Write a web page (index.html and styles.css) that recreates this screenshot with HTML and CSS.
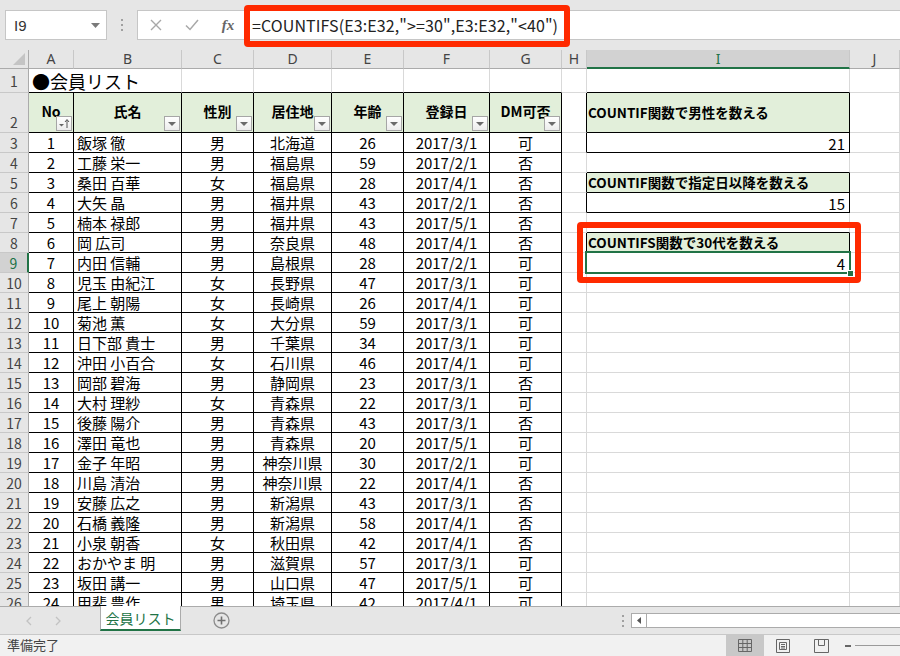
FILE: index.html
```html
<!DOCTYPE html>
<html lang="ja">
<head>
<meta charset="utf-8">
<title>会員リスト</title>
<link rel="stylesheet" href="styles.css">
</head>
<body>
<div class="app">
  <div class="fbar">
    <div class="namebox"><span class="nb-text">I9</span><svg class="nb-arrow" width="9" height="5" viewBox="0 0 9 5"><path d="M0 0H9L4.5 5Z" fill="#7a7a7a"/></svg></div>
    <div class="vdots"><i></i><i></i><i></i></div>
    <div class="formula">
      <span class="fbtn"><svg width="12" height="12" viewBox="0 0 12 12"><path d="M1 1L11 11M11 1L1 11" stroke="#a8a8a8" stroke-width="1.4" fill="none"/></svg></span>
      <span class="fbtn"><svg width="14" height="12" viewBox="0 0 14 12"><path d="M1 6.5L5 10.5L13 1" stroke="#a8a8a8" stroke-width="1.5" fill="none"/></svg></span>
      <span class="fbtn fx">fx</span>
      <span class="ftext">=COUNTIFS(E3:E32,"&gt;=30",E3:E32,"&lt;40")</span>
    </div>
    <div class="hl hl-formula"></div>
  </div>

  <div class="sheet">
    <table class="grid">
      <colgroup>
        <col class="w-rh"><col class="w-a"><col class="w-b"><col class="w-c"><col class="w-d"><col class="w-e"><col class="w-f"><col class="w-g"><col class="w-h"><col class="w-i"><col class="w-j">
      </colgroup>
      <tr class="r-ch">
        <td class="corner"><svg width="29" height="18" viewBox="0 0 29 18"><path d="M25 3V15H13Z" fill="#c4c4c4"/></svg></td>
        <td class="ch">A</td><td class="ch">B</td><td class="ch">C</td><td class="ch">D</td><td class="ch">E</td><td class="ch">F</td><td class="ch">G</td><td class="ch">H</td><td class="ch sel">I</td><td class="ch">J</td>
      </tr>
      <tr class="r-1">
        <td class="rh">1</td>
        <td class="title bb" colspan="2">●会員リスト</td>
        <td class="bb"></td><td class="bb"></td><td class="bb"></td><td class="bb"></td><td class="bb"></td><td></td><td class="bb"></td><td></td>
      </tr>
      <tr class="r-2">
        <td class="rh rh-bot">2</td>
        <td class="t hd">No<span class="fb fb-sort"><svg width="14" height="13" viewBox="0 0 14 13"><path d="M2 7H7L4.5 9.5Z" fill="#666"/><path d="M10 11V3M8 5L10 2.5L12 5" stroke="#555" stroke-width="1" fill="none"/></svg></span></td>
        <td class="t hd">氏名<span class="fb"></span></td>
        <td class="t hd">性別<span class="fb"></span></td>
        <td class="t hd">居住地<span class="fb"></span></td>
        <td class="t hd">年齢<span class="fb"></span></td>
        <td class="t hd">登録日<span class="fb"></span></td>
        <td class="t hd">DM可否<span class="fb"></span></td>
        <td class="hb"></td>
        <td class="bx bxh">COUNTIF関数で男性を数える</td>
        <td></td>
      </tr>
      <tr><td class="rh">3</td><td class="t c">1</td><td class="t l">飯塚 徹</td><td class="t c">男</td><td class="t c">北海道</td><td class="t c">26</td><td class="t c">2017/3/1</td><td class="t c">可</td><td class="hb"></td><td class="bx v">21</td><td></td></tr>
      <tr><td class="rh">4</td><td class="t c">2</td><td class="t l">工藤 栄一</td><td class="t c">男</td><td class="t c">福島県</td><td class="t c">59</td><td class="t c">2017/2/1</td><td class="t c">否</td><td></td><td class="bb"></td><td></td></tr>
      <tr><td class="rh">5</td><td class="t c">3</td><td class="t l">桑田 百華</td><td class="t c">女</td><td class="t c">福島県</td><td class="t c">28</td><td class="t c">2017/4/1</td><td class="t c">否</td><td class="hb"></td><td class="bx bxh">COUNTIF関数で指定日以降を数える</td><td></td></tr>
      <tr><td class="rh">6</td><td class="t c">4</td><td class="t l">大矢 晶</td><td class="t c">男</td><td class="t c">福井県</td><td class="t c">43</td><td class="t c">2017/2/1</td><td class="t c">否</td><td class="hb"></td><td class="bx v">15</td><td></td></tr>
      <tr><td class="rh">7</td><td class="t c">5</td><td class="t l">楠本 禄郎</td><td class="t c">男</td><td class="t c">福井県</td><td class="t c">43</td><td class="t c">2017/5/1</td><td class="t c">否</td><td></td><td class="bb"></td><td></td></tr>
      <tr><td class="rh">8</td><td class="t c">6</td><td class="t l">岡 広司</td><td class="t c">男</td><td class="t c">奈良県</td><td class="t c">48</td><td class="t c">2017/4/1</td><td class="t c">否</td><td class="hb"></td><td class="bx bxh">COUNTIFS関数で30代を数える</td><td></td></tr>
      <tr><td class="rh rsel">9</td><td class="t c">7</td><td class="t l">内田 信輔</td><td class="t c">男</td><td class="t c">島根県</td><td class="t c">28</td><td class="t c">2017/2/1</td><td class="t c">可</td><td class="hb"></td><td class="bx v cur">4<span class="selbox"></span><span class="handle"></span></td><td></td></tr>
      <tr><td class="rh">10</td><td class="t c">8</td><td class="t l">児玉 由紀江</td><td class="t c">女</td><td class="t c">長野県</td><td class="t c">47</td><td class="t c">2017/3/1</td><td class="t c">可</td><td></td><td></td><td></td></tr>
      <tr><td class="rh">11</td><td class="t c">9</td><td class="t l">尾上 朝陽</td><td class="t c">女</td><td class="t c">長崎県</td><td class="t c">26</td><td class="t c">2017/4/1</td><td class="t c">可</td><td></td><td></td><td></td></tr>
      <tr><td class="rh">12</td><td class="t c">10</td><td class="t l">菊池 薫</td><td class="t c">女</td><td class="t c">大分県</td><td class="t c">59</td><td class="t c">2017/3/1</td><td class="t c">可</td><td></td><td></td><td></td></tr>
      <tr><td class="rh">13</td><td class="t c">11</td><td class="t l">日下部 貴士</td><td class="t c">男</td><td class="t c">千葉県</td><td class="t c">34</td><td class="t c">2017/3/1</td><td class="t c">可</td><td></td><td></td><td></td></tr>
      <tr><td class="rh">14</td><td class="t c">12</td><td class="t l">沖田 小百合</td><td class="t c">女</td><td class="t c">石川県</td><td class="t c">46</td><td class="t c">2017/4/1</td><td class="t c">可</td><td></td><td></td><td></td></tr>
      <tr><td class="rh">15</td><td class="t c">13</td><td class="t l">岡部 碧海</td><td class="t c">男</td><td class="t c">静岡県</td><td class="t c">23</td><td class="t c">2017/3/1</td><td class="t c">否</td><td></td><td></td><td></td></tr>
      <tr><td class="rh">16</td><td class="t c">14</td><td class="t l">大村 理紗</td><td class="t c">女</td><td class="t c">青森県</td><td class="t c">22</td><td class="t c">2017/3/1</td><td class="t c">可</td><td></td><td></td><td></td></tr>
      <tr><td class="rh">17</td><td class="t c">15</td><td class="t l">後藤 陽介</td><td class="t c">男</td><td class="t c">青森県</td><td class="t c">43</td><td class="t c">2017/3/1</td><td class="t c">否</td><td></td><td></td><td></td></tr>
      <tr><td class="rh">18</td><td class="t c">16</td><td class="t l">澤田 竜也</td><td class="t c">男</td><td class="t c">青森県</td><td class="t c">20</td><td class="t c">2017/5/1</td><td class="t c">可</td><td></td><td></td><td></td></tr>
      <tr><td class="rh">19</td><td class="t c">17</td><td class="t l">金子 年昭</td><td class="t c">男</td><td class="t c">神奈川県</td><td class="t c">30</td><td class="t c">2017/2/1</td><td class="t c">可</td><td></td><td></td><td></td></tr>
      <tr><td class="rh">20</td><td class="t c">18</td><td class="t l">川島 清治</td><td class="t c">男</td><td class="t c">神奈川県</td><td class="t c">22</td><td class="t c">2017/4/1</td><td class="t c">否</td><td></td><td></td><td></td></tr>
      <tr><td class="rh">21</td><td class="t c">19</td><td class="t l">安藤 広之</td><td class="t c">男</td><td class="t c">新潟県</td><td class="t c">43</td><td class="t c">2017/3/1</td><td class="t c">否</td><td></td><td></td><td></td></tr>
      <tr><td class="rh">22</td><td class="t c">20</td><td class="t l">石橋 義隆</td><td class="t c">男</td><td class="t c">新潟県</td><td class="t c">58</td><td class="t c">2017/4/1</td><td class="t c">否</td><td></td><td></td><td></td></tr>
      <tr><td class="rh">23</td><td class="t c">21</td><td class="t l">小泉 朝香</td><td class="t c">女</td><td class="t c">秋田県</td><td class="t c">42</td><td class="t c">2017/4/1</td><td class="t c">否</td><td></td><td></td><td></td></tr>
      <tr><td class="rh">24</td><td class="t c">22</td><td class="t l">おかやま 明</td><td class="t c">男</td><td class="t c">滋賀県</td><td class="t c">57</td><td class="t c">2017/3/1</td><td class="t c">可</td><td></td><td></td><td></td></tr>
      <tr><td class="rh">25</td><td class="t c">23</td><td class="t l">坂田 講一</td><td class="t c">男</td><td class="t c">山口県</td><td class="t c">47</td><td class="t c">2017/5/1</td><td class="t c">可</td><td></td><td></td><td></td></tr>
      <tr><td class="rh">26</td><td class="t c">24</td><td class="t l">甲斐 豊作</td><td class="t c">男</td><td class="t c">埼玉県</td><td class="t c">42</td><td class="t c">2017/4/1</td><td class="t c">可</td><td></td><td></td><td></td></tr>
    </table>
    <div class="hl hl-cells"></div>
  </div>

  <div class="tabs">
    <div class="nav">
      <svg class="nav-l" width="6" height="10" viewBox="0 0 6 10"><path d="M5 1L1 5L5 9" stroke="#c2c2c2" stroke-width="1.3" fill="none"/></svg>
      <svg class="nav-r" width="6" height="10" viewBox="0 0 6 10"><path d="M1 1L5 5L1 9" stroke="#c2c2c2" stroke-width="1.3" fill="none"/></svg>
    </div>
    <div class="tab">会員リスト</div>
    <div class="add"><svg width="17" height="17" viewBox="0 0 17 17"><circle cx="8.5" cy="8.5" r="7.5" stroke="#8c8c8c" stroke-width="1.3" fill="none"/><path d="M8.5 4.5V12.5M4.5 8.5H12.5" stroke="#707070" stroke-width="1.6"/></svg></div>
    <div class="spacer"></div>
    <div class="sdots"><i></i><i></i><i></i></div>
    <div class="hscroll"><span class="hs-btn"><svg width="5" height="7" viewBox="0 0 5 7"><path d="M4 0V7L0 3.5Z" fill="#555"/></svg></span></div>
  </div>

  <div class="status">
    <span class="ready">準備完了</span>
    <div class="views">
      <span class="vbtn on"><svg width="14" height="13" viewBox="0 0 14 13"><path d="M0.5 0.5H13.5V12.5H0.5Z M0.5 4.5H13.5 M0.5 8.5H13.5 M4.8 0.5V12.5 M9.2 0.5V12.5" stroke="#666" stroke-width="1" fill="none"/></svg></span>
      <span class="vbtn"><svg width="14" height="14" viewBox="0 0 14 14"><path d="M0.5 0.5H13.5V13.5H0.5Z M3.5 3.5H10.5V10.5H3.5Z M5 5.5H9 M5 7.5H9 M5 9H9" stroke="#666" stroke-width="1" fill="none"/></svg></span>
      <span class="vbtn"><svg width="15" height="14" viewBox="0 0 15 14"><path d="M0.5 0.5H14.5V13.5H0.5Z M4.5 0.5V6.5H10.5V0.5" stroke="#666" stroke-width="1" fill="none"/></svg></span>
      <span class="zminus"></span>
      <span class="zline"></span>
    </div>
  </div>
</div>
</body>
</html>
```
FILE: styles.css
```css
* { box-sizing: border-box; }
html, body { margin: 0; padding: 0; }
body {
  width: 900px;
  height: 656px;
  overflow: hidden;
  background: #e6e6e6;
  font-family: "Noto Sans CJK JP", "Noto Sans", sans-serif;
  color: #000;
}
.app {
  width: 900px;
  height: 656px;
  display: flex;
  flex-direction: column;
}

/* formula bar */
.fbar {
  position: relative;
  height: 50px;
  flex: none;
  background: #e6e6e6;
  display: flex;
  align-items: flex-start;
  padding-top: 10px;
}
.namebox {
  margin-left: 5px;
  width: 102px;
  height: 30px;
  background: #fff;
  border: 1px solid #c6c6c6;
  display: flex;
  align-items: center;
  justify-content: space-between;
  padding: 0 6px 0 8px;
}
.nb-text { font-size: 15px; color: #333; line-height: 1; font-family: "Liberation Sans", sans-serif; }
.vdots {
  width: 30px;
  height: 30px;
  display: flex;
  flex-direction: column;
  align-items: center;
  justify-content: center;
  gap: 3px;
}
.vdots i, .sdots i { display: block; width: 2px; height: 2px; background: #a0a0a0; }
.formula {
  flex: 1;
  height: 30px;
  background: #fff;
  border: 1px solid #c6c6c6;
  border-right: none;
  display: flex;
  align-items: center;
}
.fbtn {
  width: 36px;
  display: flex;
  justify-content: center;
  align-items: center;
}
.fx {
  font-family: "Liberation Serif", serif;
  font-style: italic;
  font-weight: bold;
  font-size: 15px;
  color: #666;
}
.ftext {
  padding-left: 6px;
  font-size: 16px;
  color: #222;
  white-space: nowrap;
  letter-spacing: 0.1px;
}
.hl {
  position: absolute;
  border: 6px solid #ff2a00;
  border-radius: 4px;
  pointer-events: none;
}
.hl-formula { left: 244px; top: 5px; width: 326px; height: 42px; }

/* sheet */
.sheet {
  position: relative;
  height: 556px;
  flex: none;
  overflow: hidden;
  background: #fff;
}
.grid {
  table-layout: fixed;
  border-collapse: separate;
  border-spacing: 0;
  width: 900px;
}
.w-rh { width: 29px; }
.w-a { width: 45px; }
.w-b { width: 108px; }
.w-c { width: 72px; }
.w-d { width: 78px; }
.w-e { width: 72px; }
.w-f { width: 86px; }
.w-g { width: 72px; }
.w-h { width: 25px; }
.w-i { width: 263px; }
.w-j { width: 50px; }

.grid tr { height: 20px; }
.grid tr.r-ch { height: 19px; }
.grid tr.r-1 { height: 23px; }
.grid tr.r-2 { height: 40px; }
.grid td {
  padding: 0 2px;
  border-right: 1px solid #d9d9d9;
  border-bottom: 1px solid #d9d9d9;
  white-space: nowrap;
  overflow: hidden;
  font-size: 15px;
  line-height: 17px;
  vertical-align: middle;
}
.grid td.corner {
  padding: 0;
  background: #e6e6e6;
  border-right: 1px solid #ababab;
  border-bottom: 1px solid #ababab;
  line-height: 0;
}
.corner svg { display: block; }
.grid td.ch {
  background: #e6e6e6;
  border-right: 1px solid #c8c8c8;
  border-bottom: 1px solid #ababab;
  text-align: center;
  font-size: 14px;
  line-height: 16px;
  color: #444;
  font-family: "Noto Sans", sans-serif;
}
.grid td.ch.sel {
  background: #d2d2d2;
  color: #217346;
  border-bottom: 2px solid #217346;
}
.grid td.rh {
  background: #e6e6e6;
  border-right: 1px solid #ababab;
  border-bottom: 1px solid #c8c8c8;
  text-align: center;
  font-size: 14px;
  color: #444;
  padding: 0;
  padding-top: 2px;
}
.grid td.rh-bot { vertical-align: bottom; padding-bottom: 1px; }
.grid td.rsel {
  background: #d2d2d2;
  color: #217346;
  border-right: 2px solid #217346;
}
.grid td.title {
  font-size: 18px;
  line-height: 22px;
  padding-left: 3px;
  padding-top: 1px;
  overflow: visible;
}
.grid td.bb { border-bottom-color: #000; }
.grid td.t { border-right-color: #000; border-bottom-color: #000; }
.grid td.hb { border-right-color: #000; }
.grid td.c { text-align: center; }
.grid td.l { text-align: left; padding-left: 3px; }
.grid td.hd {
  position: relative;
  background: #e2efda;
  text-align: center;
  font-weight: bold;
  font-size: 14px;
  padding-bottom: 2px;
}
.grid td.bx {
  border-right-color: #000;
  border-bottom-color: #000;
}
.grid td.bxh {
  background: #e2efda;
  font-weight: bold;
  font-size: 13.5px;
  padding-left: 1px;
}
.grid td.v { text-align: right; padding-right: 4px; padding-top: 1px; }
.grid td.cur { position: relative; overflow: visible; }
.selbox {
  position: absolute;
  left: -2px;
  top: -2px;
  right: -2px;
  bottom: -2px;
  border: 2px solid #217346;
}
.handle {
  position: absolute;
  right: -5px;
  bottom: -5px;
  width: 7px;
  height: 7px;
  background: #217346;
  border: 1px solid #fff;
}
.fb {
  position: absolute;
  right: 1px;
  bottom: 1px;
  width: 16px;
  height: 15px;
  border: 1px solid #a6a6a6;
  background: linear-gradient(#ffffff, #ececec);
}
.fb::after {
  content: "";
  position: absolute;
  left: 3px;
  top: 5px;
  border-left: 4px solid transparent;
  border-right: 4px solid transparent;
  border-top: 4px solid #6a6a6a;
}
.fb-sort::after { display: none; }
.fb-sort svg { display: block; }
.hl-cells { left: 577px; top: 172px; width: 284px; height: 61px; }

/* sheet tabs */
.tabs {
  height: 28px;
  flex: none;
  display: flex;
  background: #e6e6e6;
  border-top: 1px solid #ababab;
  position: relative;
}
.nav {
  width: 100px;
  display: flex;
  align-items: center;
  padding-left: 26px;
  gap: 23px;
}
.tab {
  width: 81px;
  height: 25px;
  margin-top: -1px;
  background: #fff;
  border-left: 1px solid #ababab;
  border-right: 1px solid #ababab;
  border-bottom: 2px solid #217346;
  color: #217346;
  font-size: 14px;
  text-align: center;
  line-height: 24px;
}
.add {
  width: 80px;
  display: flex;
  align-items: center;
  padding-left: 32px;
}
.add svg { display: block; }
.spacer { flex: 1; }
.sdots {
  width: 16px;
  display: flex;
  flex-direction: column;
  align-items: center;
  justify-content: center;
  gap: 3px;
  margin-right: 0;
}
.hscroll {
  width: 269px;
  height: 15px;
  margin-top: 6px;
  background: #fff;
  border: 1px solid #ababab;
  border-right: none;
  display: flex;
}
.hs-btn {
  width: 15px;
  border-right: 1px solid #ababab;
  display: flex;
  align-items: center;
  justify-content: center;
}
.hs-btn svg { display: block; }

/* status bar */
.status {
  height: 22px;
  flex: 1;
  background: #f1f1f1;
  border-top: 1px solid #c8c8c8;
  display: flex;
  justify-content: space-between;
  align-items: stretch;
}
.ready {
  font-size: 13px;
  color: #444;
  padding-left: 7px;
  line-height: 20px;
}
.views {
  display: flex;
  align-items: stretch;
}
.vbtn {
  width: 38px;
  display: flex;
  align-items: center;
  justify-content: center;
}
.vbtn.on { background: #c8c8c8; }
.vbtn svg { display: block; }
.zminus {
  width: 6px;
  height: 2px;
  background: #666;
  align-self: center;
  margin-left: 5px;
}
.zline {
  width: 45px;
  height: 1px;
  background: #9a9a9a;
  align-self: center;
  margin-left: 4px;
}
```
